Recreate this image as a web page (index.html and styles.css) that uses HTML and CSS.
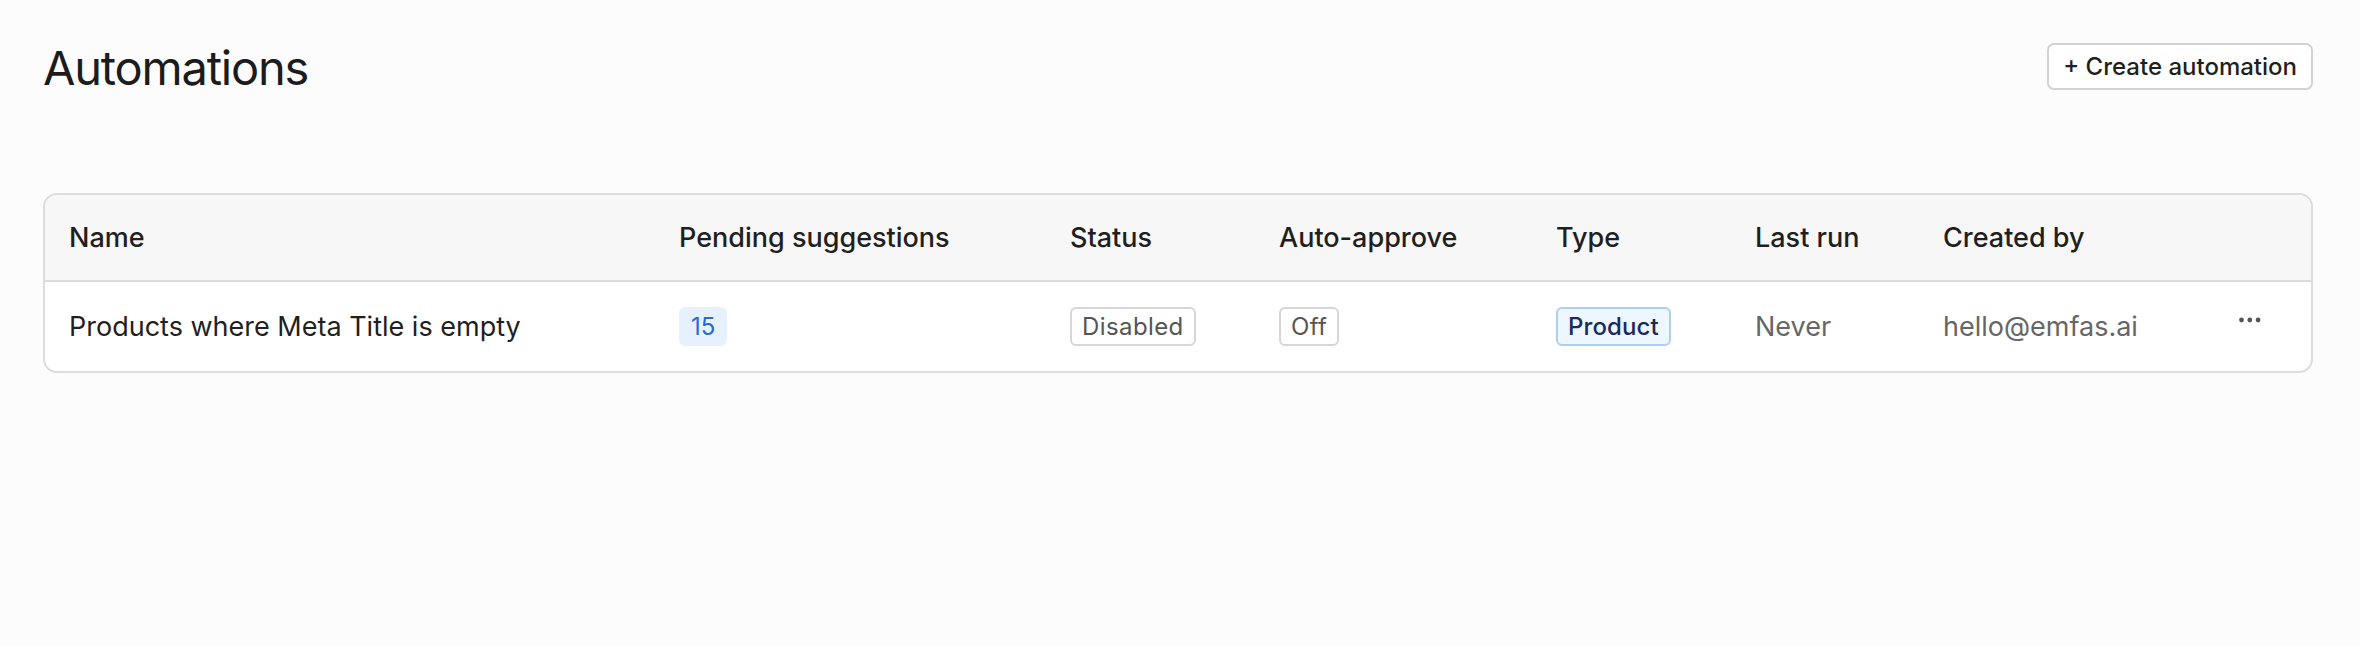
FILE: index.html
```html
<!DOCTYPE html>
<html lang="en">
<head>
<meta charset="utf-8">
<title>Automations</title>
<link rel="stylesheet" href="styles.css">
</head>
<body>
<main class="page">
  <header class="page-header">
    <h1 class="page-title">Automations</h1>
    <button class="btn" type="button">+ Create automation</button>
  </header>

  <section class="table">
    <div class="row head">
      <div class="cell">Name</div>
      <div class="cell">Pending suggestions</div>
      <div class="cell">Status</div>
      <div class="cell">Auto-approve</div>
      <div class="cell">Type</div>
      <div class="cell">Last run</div>
      <div class="cell">Created by</div>
      <div class="cell"></div>
    </div>
    <div class="row body">
      <div class="cell">Products where Meta Title is empty</div>
      <div class="cell"><span class="tag tag-count">15</span></div>
      <div class="cell"><span class="tag tag-gray">Disabled</span></div>
      <div class="cell"><span class="tag tag-gray">Off</span></div>
      <div class="cell"><span class="tag tag-blue">Product</span></div>
      <div class="cell muted">Never</div>
      <div class="cell muted">hello@emfas.ai</div>
      <div class="cell actions">
        <svg class="dots" width="24" height="8" viewBox="0 0 24 8" aria-label="More actions">
          <circle cx="3.5" cy="4" r="2.4" fill="#555"/>
          <circle cx="11.8" cy="4" r="2.4" fill="#555"/>
          <circle cx="20.1" cy="4" r="2.4" fill="#555"/>
        </svg>
      </div>
    </div>
  </section>
</main>
</body>
</html>
```

FILE: styles.css
```css
* { box-sizing: border-box; }

html, body {
  margin: 0;
  padding: 0;
  background: #fcfcfc;
}

body {
  font-family: Inter, "Liberation Sans", sans-serif;
  color: #1f1f1f;
}

.page {
  padding: 43px 47px 0 43px;
}

.page-header {
  display: flex;
  justify-content: space-between;
  align-items: center;
  height: 47px;
}

.page-title {
  margin: 0;
  padding-top: 2px;
  font-size: 47px;
  line-height: 47px;
  font-weight: 400;
  letter-spacing: -1.2px;
  color: #1c1c1c;
}

.btn {
  height: 47px;
  padding: 0 14px;
  font-family: inherit;
  font-size: 24px;
  font-weight: 500;
  color: #1f1f1f;
  background: #ffffff;
  border: 2px solid #d2d2d2;
  border-radius: 7px;
}

.table {
  margin-top: 103px;
  border: 2px solid #dcdcdc;
  border-radius: 14px;
  overflow: hidden;
  background: #ffffff;
}

.row {
  display: grid;
  grid-template-columns: 610px 391px 209px 277px 199px 188px 1fr 111px;
  align-items: center;
}

.row.head {
  height: 87px;
  background: #f7f7f7;
  border-bottom: 2px solid #dcdcdc;
  font-weight: 500;
}

.row.body {
  height: 89px;
}

.cell {
  padding-left: 24px;
  font-size: 27px;
  white-space: nowrap;
}

.muted { color: #666666; }

.tag {
  display: inline-flex;
  align-items: center;
  height: 39px;
  padding: 0 10px;
  border: 2px solid transparent;
  border-radius: 6px;
  font-size: 24px;
  font-weight: 400;
  letter-spacing: 0.4px;
}

.tag-count {
  background: #e7f1fd;
  border-color: #e7f1fd;
  color: #2a6bc6;
  letter-spacing: 0;
}

.tag-gray {
  background: #ffffff;
  border-color: #d6d6d6;
  color: #555555;
}

.tag-blue {
  background: #eef6ff;
  border-color: #acd0f5;
  color: #1b2a5c;
  font-weight: 500;
  letter-spacing: 0.1px;
}

.actions {
  padding-left: 38px;
  display: flex;
  align-items: center;
}

.dots {
  display: block;
  margin-bottom: 13px;
}
```
